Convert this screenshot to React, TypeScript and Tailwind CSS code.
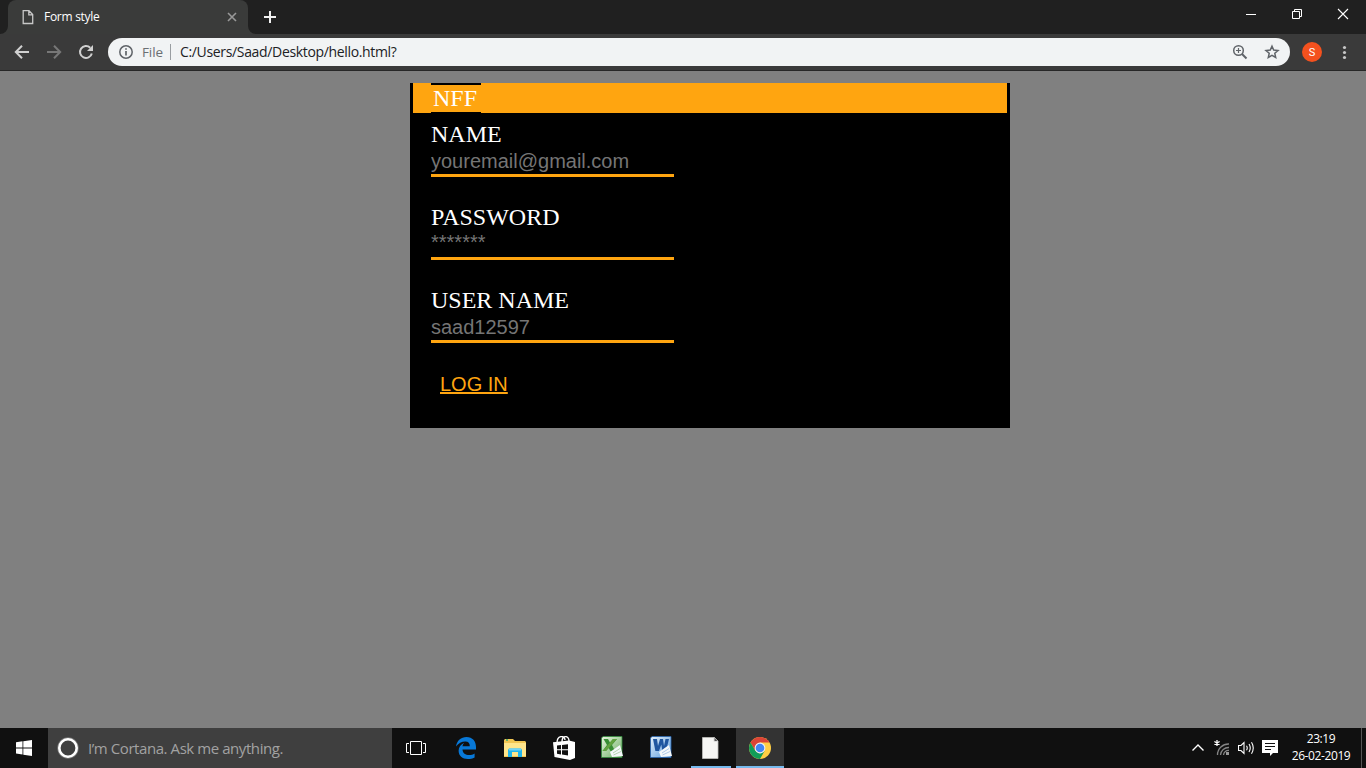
import type { ReactNode } from "react";

function TabStrip() {
  return (
    <div className="flex h-[34px] items-stretch bg-[#202020] pl-2">
      <div className="relative flex h-full w-60 items-center rounded-t-lg bg-[#3a3b3a] text-white">
        <svg className="absolute -left-2 bottom-0" width="8" height="8"><path d="M8 0V8H0A8 8 0 0 0 8 0Z" fill="#3a3b3a" /></svg>
        <svg className="absolute -right-2 bottom-0" width="8" height="8"><path d="M0 0V8H8A8 8 0 0 1 0 0Z" fill="#3a3b3a" /></svg>
        <svg className="ml-[14px]" width="12" height="16" viewBox="0 0 12 16" fill="none" stroke="#c8c8c8" strokeWidth="1.3">
          <path d="M1.2 1.7H7L10.7 5.5V14.5H1.2ZM6.8 1.7V5.8H10.7" />
        </svg>
        <span className="ml-[10px] w-[175px] text-[12px] leading-4 tracking-[-0.28px]">Form style</span>
        <svg className="ml-[6px]" width="14" height="14" viewBox="0 0 14 14" stroke="#999" strokeWidth="1.6"><path d="M3 3L11 11M11 3L3 11" /></svg>
      </div>
      <svg className="ml-[14px] mt-[9px]" width="16" height="16" stroke="#f1f1f1" strokeWidth="2"><path d="M2 8H14M8 2V14" /></svg>
      <div className="ml-auto flex h-7">
        <svg width="46" height="28" stroke="#fff"><path d="M18 14.5H28" /></svg>
        <svg width="46" height="28" stroke="#fff" fill="none"><path d="M18.5 11.5H25.5V18.5H18.5ZM20.5 11.5V9.5H27.5V16.5H25.5" /></svg>
        <svg width="46" height="28" stroke="#fff" strokeWidth="1.1"><path d="M18 9L28 19M28 9L18 19" /></svg>
      </div>
    </div>
  );
}

function Toolbar() {
  return (
    <div className="flex h-[37px] items-center border-b border-[#272727] bg-[#3a3a3a]">
      <svg className="ml-[14px]" width="16" height="16" fill="none" stroke="#d0d0d0" strokeWidth="2"><path d="M15 8H2.5M8 1.7L1.8 8L8 14.3" /></svg>
      <svg className="ml-4" width="16" height="16" fill="none" stroke="#777" strokeWidth="2"><path d="M1 8H13.5M8 1.7L14.2 8L8 14.3" /></svg>
      <svg className="ml-4" width="16" height="16" fill="none" stroke="#d0d0d0" strokeWidth="2"><path d="M13.8 9.5A6 6 0 1 1 12.2 3.7" /><path d="M15 1V7H9Z" fill="#d0d0d0" stroke="none" /></svg>
      <div className="ml-[14px] flex h-7 w-[1182px] items-center rounded-full bg-[#f1f3f4] text-[14px] leading-5">
        <svg className="ml-[10px]" width="16" height="16" fill="none" stroke="#5f6368" strokeWidth="1.5"><circle cx="8" cy="8" r="6.2" /><path d="M8 7V11.5M8 4.2V5.8" strokeWidth="1.7" /></svg>
        <span className="ml-[8px] w-[28px] text-[13.5px] tracking-[-0.1px] text-[#6b6f73]">File</span>
        <span className="h-4 w-px bg-[#999da1]" />
        <span className="ml-[9px] whitespace-nowrap text-[14px] tracking-[-0.34px] text-[#202124]">C:/Users/Saad/Desktop/hello.html?</span>
        <svg className="ml-auto" width="16" height="16" fill="none" stroke="#5f6368" strokeWidth="1.5"><circle cx="6.5" cy="6.5" r="4.8" /><path d="M10 10L14.5 14.5" strokeWidth="2" /><path d="M4 6.5H9M6.5 4V9" strokeWidth="1.2" /></svg>
        <svg className="ml-4 mr-[10px]" width="16" height="16" fill="none" stroke="#5f6368" strokeWidth="1.5"><path d="M8 2.2L9.7 6.1L14 6.5L10.8 9.3L11.7 13.5L8 11.3L4.3 13.5L5.2 9.3L2 6.5L6.3 6.1Z" /></svg>
      </div>
      <div className="ml-3 flex size-5 items-center justify-center rounded-full bg-[#f4511e] pt-px text-[11px] leading-none text-white font-[Roboto]">S</div>
      <svg className="ml-[14px]" width="16" height="16" fill="#c7c7c7"><circle cx="8.5" cy="3.5" r="1.6" /><circle cx="8.5" cy="8.5" r="1.6" /><circle cx="8.5" cy="13.5" r="1.6" /></svg>
    </div>
  );
}

function Field({ label, placeholder, type = "text" }: { label: string; placeholder: string; type?: string }) {
  return (
    <label className="flex h-[83px] flex-col items-start">
      <span className="h-[29px] font-['Liberation_Serif',serif] text-[24px] leading-[28px] text-white">{label}</span>
      <input
        type={type}
        placeholder={placeholder}
        className={`h-[28px] w-[243px] border-b-[3px] border-[#ffa510] bg-transparent p-0 font-['Liberation_Sans',sans-serif] text-[20px] leading-6 outline-none placeholder:text-[#757575] ${type === "password" ? "pb-[5px]" : "pb-px"}`}
      />
    </label>
  );
}

function LoginForm() {
  return (
    <form className="ml-[410px] mt-3 h-[345px] w-[600px] bg-black px-[3px]">
      <div className="flex h-[30px] bg-[#ffa510] pl-[18px]">
        <div className="h-[30px] w-[50px] border-b border-t-2 border-black pl-[2px] font-['Liberation_Serif',serif] text-[24px] leading-[27px] text-white">NFF</div>
      </div>
      <div className="pl-[18px] pt-[7px]">
        <Field label="NAME" placeholder="youremail@gmail.com" />
        <Field label="PASSWORD" placeholder="*******" type="password" />
        <Field label="USER NAME" placeholder="saad12597" />
        <button type="button" className="ml-[9px] mt-[3px] block font-['Liberation_Sans',sans-serif] text-[20px] leading-6 text-[#ffa510] underline">LOG IN</button>
      </div>
    </form>
  );
}

function Cell({ children, className = "" }: { children: ReactNode; className?: string }) {
  return <div className={`flex h-10 w-12 shrink-0 items-center justify-center ${className}`}>{children}</div>;
}

function OfficeIcon({ excel = false }: { excel?: boolean }) {
  const color = excel ? "#348c3c" : "#2864ae";
  return (
    <svg width="22" height="22">
      <defs>
        <linearGradient id={excel ? "sheetGreen" : "sheetBlue"} x1="0" y1="0" x2="1" y2="1">
          <stop stopColor={excel ? "#e8f5df" : "#e4f0fb"} />
          <stop offset="1" stopColor={excel ? "#69ad62" : "#5d9ddd"} />
        </linearGradient>
      </defs>
      <path d="M2 .5H21V21.5H.5V2Z" fill={`url(#${excel ? "sheetGreen" : "sheetBlue"})`} stroke={color} strokeWidth=".8" />
      {excel ? (
        <>
          <path d="M2.5 3H7L9 6.5L12 3H16L11 9L14 15H9.5L7.6 12L5 15H1.5L6 9Z" fill="#388d34" />
          <path d="M12 3H16L5 15H1.5Z" fill="#62a23f" />
        </>
      ) : (
        <path d="M3 3H7L8 10L10 3H13L14 10L15.5 3H19L16 15H12.4L11.3 8.5L9 15H5.4Z" fill="#1f56a0" />
      )}
      <path d="M9 16L19 9L22 20L11 21Z" fill="#f5f8fa" />
      <path d="M12 17L19 12.5M12.5 19L20 15.5" stroke={excel ? "#b5d5b1" : "#afcae8"} strokeWidth="1" />
    </svg>
  );
}

function Taskbar() {
  return (
    <div className="flex h-10 bg-[#101010]">
      <Cell>
        <svg width="16" height="16" fill="#fff"><path d="M0 2.3L6.5 1.3V7.4H0ZM7.3 1.2L16 0V7.4H7.3ZM0 8.4H6.5V14.6L0 13.6ZM7.3 8.4H16V16L7.3 14.7Z" /></svg>
      </Cell>
      <div className="flex w-[344px] items-center bg-[#3f3f3f]">
        <svg className="ml-2" width="24" height="24" fill="none"><circle cx="12" cy="12" r="10" stroke="#777" strokeWidth="1.5" /><circle cx="12" cy="12" r="8.7" stroke="#fff" strokeWidth="2.6" /></svg>
        <span className="ml-2 whitespace-nowrap text-[15px] leading-5 tracking-[-0.43px] text-[#a2a2a2]">I’m Cortana. Ask me anything.</span>
      </div>
      <Cell>
        <svg width="20" height="16" fill="none" stroke="#fff"><path d="M4.5 1.5H15.5V14.5H4.5ZM3 3.5H.5V12.5H3M17 3.5H19.5V12.5H17" /></svg>
      </Cell>
      <Cell className="ml-[2px]">
        <svg width="20" height="22" viewBox="0 0 20 22" fill="#0878d7"><path d="M0 9.5C1 3.5 5 0 10.5 0C16.5 0 20 4.2 20 10V12.4H6.5C6.7 16.1 9.6 18 13 18C15.2 18 17 17.3 18.6 16.4V20.4C16.6 21.5 14.3 22 11.8 22C6.4 22 2.6 18.9 2.6 13.8C2.6 10.1 4.8 7.3 8.2 5.7C7.1 6.9 6.7 8.1 6.5 9.3H13.8C13.8 6 12.5 4.4 9.3 4.4C5.8 4.4 2.2 6.2 0 9.5Z" /></svg>
      </Cell>
      <Cell className="ml-px">
        <svg width="22" height="20"><path d="M0 2L1 1H9L11 3H21L22 4V19H0Z" fill="#f2c653" /><path d="M0 5H22V18H0Z" fill="#ffe58b" /><path d="M2 2H4" stroke="#37a96d" strokeWidth="1.5" /><path d="M4 12L5 10.5H17L18 12V19H14V14H8V19H4Z" fill="#22b5ec" /><path d="M5 10.5H17V12.5H5Z" fill="#73d4f7" /></svg>
      </Cell>
      <Cell className="ml-px">
        <svg width="22" height="24"><path d="M4 7C4-1 12-1 12 4M9 6C9-1 16-1 16 5" fill="none" stroke="#fff" strokeWidth="1.4" /><path d="M0 6.3L16 4.5L22 6V22L17 24L1.5 21Z" fill="#fff" /><path d="M4 9.5L8 9V13.2H4ZM9 8.9L15 8.2V13.2H9ZM4 14.2H8V18.4L4 17.8ZM9 14.2H15V19.5L9 18.6Z" fill="#111" /></svg>
      </Cell>
      <Cell className="pb-[2px]"><OfficeIcon excel /></Cell>
      <Cell className="ml-px pb-[2px]"><OfficeIcon /></Cell>
      <Cell className="ml-[6px] !w-10 border-b-2 border-[#76b9ed] !items-start pt-[9px]">
        <svg className="mr-px" width="17" height="22"><path d="M.5 .5H12.5L16 4V21.5H.5Z" fill="#f6f6f4" stroke="#bfbfbd" strokeWidth=".8" /><path d="M12 .5V4.5H16" fill="#555" stroke="#ddd" /></svg>
      </Cell>
      <Cell className="ml-[5px] border-b-2 border-[#76b9ed] bg-[#333] !items-start pt-[9px]">
        <svg width="22" height="22" viewBox="0 0 22 22"><circle cx="11" cy="11" r="11" fill="#ffce44" /><path d="M1.5 5.5A11 11 0 0 1 20.5 5.5H11L6.3 13.8Z" fill="#db4437" /><path d="M1.5 5.5L6.3 13.7L11 16.4L15.7 13.7L11 22A11 11 0 0 1 1.5 5.5Z" fill="#109d58" /><circle cx="11" cy="11" r="5.4" fill="#f1f1f1" /><circle cx="11" cy="11" r="4.3" fill="#4285f4" /></svg>
      </Cell>
      <div className="ml-auto flex items-center">
        <svg width="14" height="16" fill="none" stroke="#fff" strokeWidth="1.4"><path d="M1.5 10.5L7 5L12.5 10.5" /></svg>
        <svg className="ml-[9px]" width="16" height="18" fill="none" stroke="#858585" strokeWidth="1.3"><path d="M3.5 16A11 11 0 0 1 15 5M6.5 16A8 8 0 0 1 15 8.5M9.5 16A5 5 0 0 1 15 11.5" /><path d="M12 13H15V16H12Z" fill="#999" stroke="none" /><path d="M3 1V7M.4 2.5L5.6 5.5M5.6 2.5L.4 5.5" stroke="#fff" strokeWidth="1.3" /></svg>
        <svg className="ml-2" width="17" height="16" fill="none" stroke="#fff" strokeWidth="1.1"><path d="M.5 5.5H3L6 2.5V13.5L3 10.5H.5ZM8.5 5.7Q10 8 8.5 10.3M11 4Q13.5 8 11 12M13.5 2.3Q17 8 13.5 13.7" /></svg>
        <svg className="ml-[7px]" width="16" height="16"><path d="M0 0H16V13H11L8 16V13H0Z" fill="#fff" /><path d="M3 3.5H13M3 6.5H13M3 9.5H9" stroke="#111" /></svg>
        <div className="ml-3 w-[62px] whitespace-nowrap pb-[2px] text-center text-[12px] leading-[17px] tracking-[-0.4px] text-white">
          <div>23:19</div>
          <div>26-02-2019</div>
        </div>
        <div className="ml-[9px] mr-1 h-10 w-px bg-[#555]" />
      </div>
    </div>
  );
}

export default function App() {
  return (
    <div className="flex h-[768px] w-[1366px] flex-col overflow-hidden bg-[#808080] font-['Open_Sans','Noto_Sans',sans-serif]">
      <TabStrip />
      <Toolbar />
      <main className="min-h-0 flex-1"><div className="flex"><LoginForm /></div></main>
      <Taskbar />
    </div>
  );
}
